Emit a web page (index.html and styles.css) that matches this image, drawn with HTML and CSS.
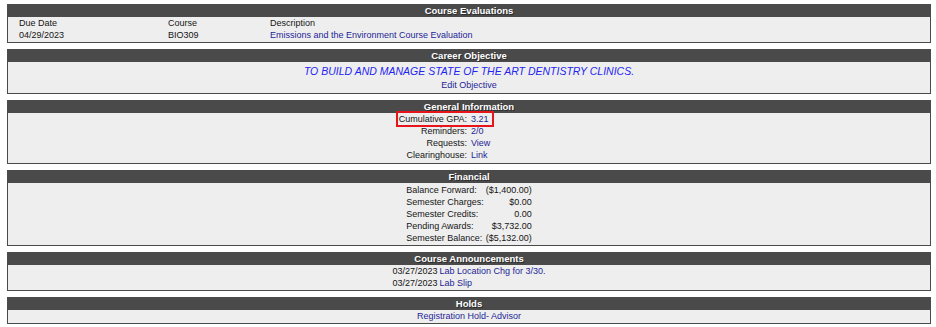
FILE: index.html
```html
<!DOCTYPE html>
<html>
<head>
  <title>Student Home</title>
  <link rel="stylesheet" href="styles.css">
</head>
<body>
  <div class="page">

    <!-- Course evaluations -->
    <div class="panel">
      <div class="panel-title">Course Evaluations</div>
      <div class="panel-body">
        <div class="eval-grid">
          <span>Due Date</span>
          <span>Course</span>
          <span>Description</span>
          <span>04/29/2023</span>
          <span>BIO309</span>
          <a href="#">Emissions and the Environment Course Evaluation</a>
        </div>
      </div>
    </div>

    <!-- Career objective -->
    <div class="panel">
      <div class="panel-title">Career Objective</div>
      <div class="panel-body objective">
        <div class="objective-text">TO BUILD AND MANAGE STATE OF THE ART DENTISTRY CLINICS.</div>
        <a href="#" class="edit-link">Edit Objective</a>
      </div>
    </div>

    <!-- General information -->
    <div class="panel">
      <div class="panel-title">General Information</div>
      <div class="panel-body info">
        <div class="info-row">
          <div class="info-label"><span class="hl hl-left">Cumulative GPA:</span></div>
          <div class="info-value"><span class="hl hl-right">3.21</span></div>
        </div>
        <div class="info-row">
          <div class="info-label">Reminders:</div>
          <div class="info-value"><a href="#">2/0</a></div>
        </div>
        <div class="info-row">
          <div class="info-label">Requests:</div>
          <div class="info-value"><a href="#">View</a></div>
        </div>
        <div class="info-row">
          <div class="info-label">Clearinghouse:</div>
          <div class="info-value"><a href="#">Link</a></div>
        </div>
      </div>
    </div>

    <!-- Financial -->
    <div class="panel">
      <div class="panel-title">Financial</div>
      <div class="panel-body money">
        <div class="money-grid">
          <span>Balance Forward:</span><span class="amount">($1,400.00)</span>
          <span>Semester Charges:</span><span class="amount">$0.00</span>
          <span>Semester Credits:</span><span class="amount">0.00</span>
          <span>Pending Awards:</span><span class="amount">$3,732.00</span>
          <span>Semester Balance:</span><span class="amount">($5,132.00)</span>
        </div>
      </div>
    </div>

    <!-- Course announcements -->
    <div class="panel">
      <div class="panel-title">Course Announcements</div>
      <div class="panel-body">
        <div class="news-grid">
          <span>03/27/2023</span><a href="#">Lab Location Chg for 3/30.</a>
          <span>03/27/2023</span><a href="#">Lab Slip</a>
        </div>
      </div>
    </div>

    <!-- Holds -->
    <div class="panel">
      <div class="panel-title">Holds</div>
      <div class="panel-body center">
        <a href="#">Registration Hold- Advisor</a>
      </div>
    </div>

  </div>
</body>
</html>
```

FILE: styles.css
```css
body {
  background-color: #FFFFFF;
  font-family: "Liberation Sans", Arial, sans-serif;
  font-size: 9px;
  color: #151515;
  margin: 0;
  padding: 0;
}

a {
  color: #1E1E96;
  text-decoration: none;
}

.page {
  display: flex;
  flex-direction: column;
  gap: 6px;
  padding: 4px 5px 0 7px;
}

.panel {
  border: 1px solid #4A4A4A;
  border-top: none;
  background-color: #EEEEEE;
}

.panel-title {
  background-color: #4A4A4A;
  color: #FFFFFF;
  font-weight: bold;
  font-size: 9.5px;
  text-align: center;
  height: 13px;
  line-height: 13px;
  text-shadow: 1px 1px 0 #2A2A2A;
}

.panel-body {
  line-height: 12px;
  padding-bottom: 1px;
}

.center {
  text-align: center;
}

.eval-grid {
  display: grid;
  grid-template-columns: 149px 102px 1fr;
  padding-left: 11px;
}

.objective {
  text-align: center;
  padding-top: 2px;
}

.objective-text {
  color: #2424F0;
  font-style: italic;
  font-size: 10.5px;
  line-height: 15px;
}

.edit-link {
  display: inline-block;
  line-height: 13px;
}

.info {
  padding-bottom: 2px;
}

.info-row {
  display: flex;
}

.info-label {
  flex: 1;
  text-align: right;
  padding-right: 2px;
}

.info-value {
  flex: 1;
  padding-left: 2px;
}

/* red annotation box round the GPA line; inline so it does not move the rows */
.hl {
  border: 2px solid #E8141B;
  padding-top: 1px;
  padding-bottom: 1px;
}

.hl-left {
  border-right: none;
  padding-left: 1px;
  padding-right: 2px;
  margin-right: -2px;
}

.hl-right {
  border-left: none;
  padding-left: 2px;
  padding-right: 3px;
  margin-left: -2px;
  color: #1E1E96;
}

.money {
  padding-top: 1px;
  padding-bottom: 1px;
}

.money-grid {
  display: grid;
  grid-template-columns: auto auto;
  justify-content: center;
  column-gap: 2px;
}

.amount {
  text-align: right;
}

.news-grid {
  display: grid;
  grid-template-columns: auto auto;
  justify-content: center;
  column-gap: 2px;
}
```
